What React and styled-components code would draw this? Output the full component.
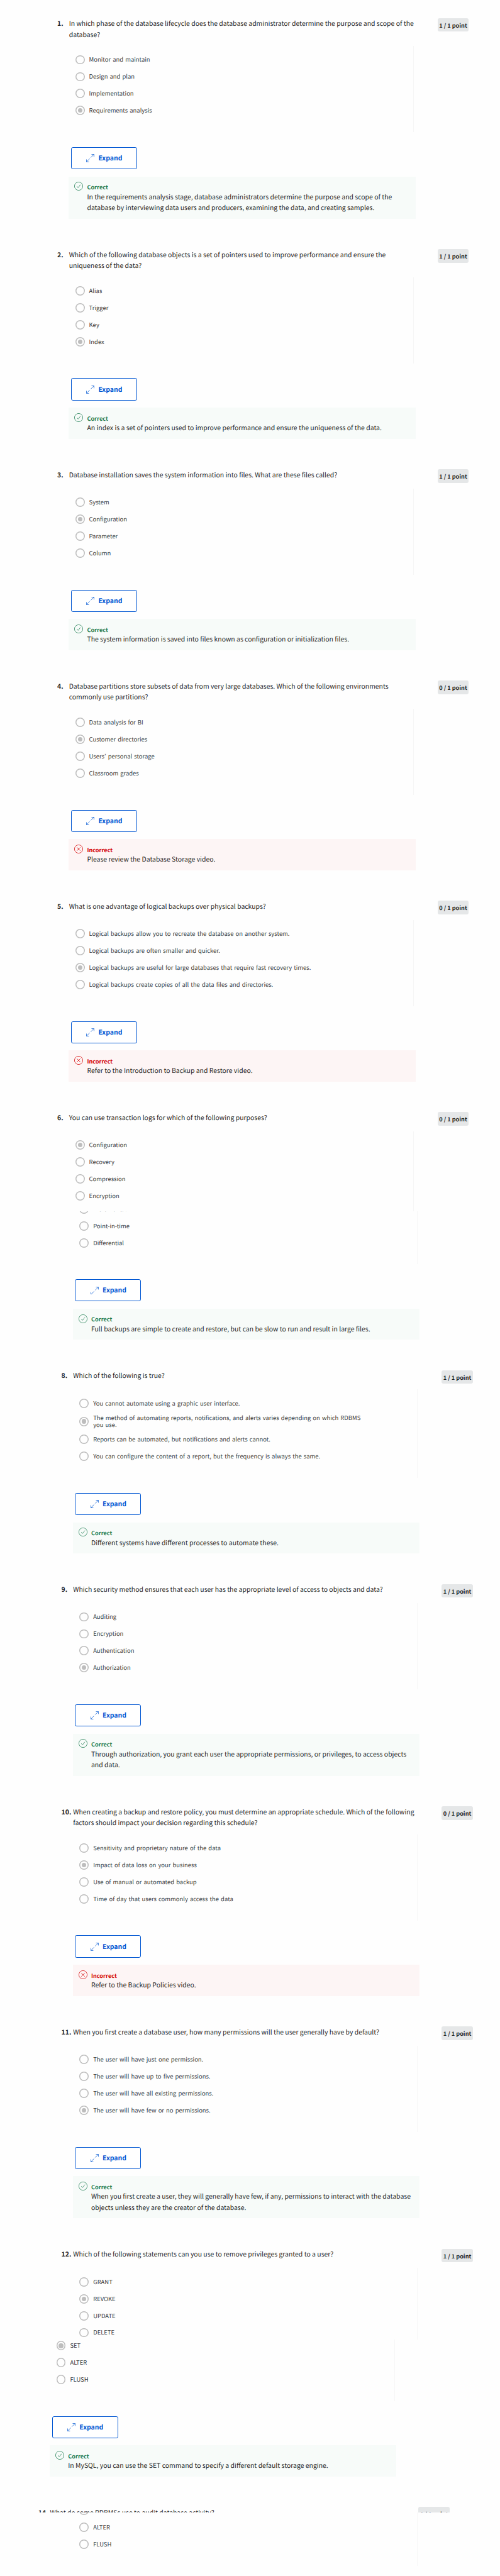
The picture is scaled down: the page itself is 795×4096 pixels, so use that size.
import React from "react";
import styled, { createGlobalStyle } from "styled-components";

const u = (n) => `${(n * 0.58447).toFixed(3)}px`;
const w = (n) => `${(n * 0.58413).toFixed(3)}px`;

const Global = createGlobalStyle`
  * { box-sizing: border-box; }
  html, body { margin: 0; padding: 0; background: #fefefe; }
  body {
    font-family: "Noto Sans CJK KR", "Noto Sans", sans-serif;
    color: #1f1f1f;
    -webkit-font-smoothing: antialiased;
    text-rendering: geometricPrecision;
  }
`;

const Page = styled.main`
  width: 795px;
  height: 4096px;
  padding-top: ${u(49)};
  overflow: hidden;
`;

const Slice = styled.section`
  display: flex;
  flex-direction: column;
  width: ${w(1121)};
  height: ${(p) => (p.$height ? u(p.$height) : "auto")};
  margin-left: ${(p) => w(155.8 + (p.$shift || 0))};
  padding-bottom: ${(p) => (p.$height ? 0 : u(83.1))};
  overflow: hidden;
`;

const Header = styled.header`
  display: flex;
  align-items: flex-start;
  min-height: ${u(36)};
  margin-bottom: ${u(16)};
`;

const Number = styled.span`
  flex: none;
  width: ${w(32)};
  padding-top: ${u(0.8)};
  margin-bottom: ${u(-0.8)};
  font-size: ${w(17.88)};
  font-weight: 700;
  line-height: ${u(30)};
  white-space: nowrap;
`;

const Title = styled.h2`
  flex: none;
  width: ${w(1003.2)};
  margin: 0 0 ${u(-0.8)};
  padding-top: ${u(0.8)};
  font-size: ${w(17.9)};
  font-weight: 400;
  line-height: ${u(30)};
  white-space: pre;
`;

const Badge = styled.span`
  flex: none;
  display: flex;
  align-items: center;
  justify-content: center;
  width: ${w(85)};
  height: ${u(36.5)};
  margin-bottom: ${u(-0.5)};
  padding-top: ${u(0.8)};
  border-radius: ${w(5)};
  background: #e5e7e8;
  font-size: ${w(15.65)};
  font-weight: 700;
  white-space: nowrap;
`;

const Options = styled.div`
  flex: none;
  width: ${w(938.6)};
  margin-left: ${w(31.6)};
  padding: ${u(14.7)} 0 ${u(36)} ${w(17.7)};
  border-right: 1px solid #f6f6f6;
`;

const Option = styled.div`
  display: flex;
  align-items: center;
  gap: ${w(12)};
  height: ${(p) => u(p.$tall ? 52.2 : 46)};
  font-size: ${w(16.15)};
  word-spacing: ${w(1.7)};
  line-height: ${u(19)};
  color: #373a3c;
  white-space: pre;
`;

const Radio = styled.span`
  flex: none;
  display: flex;
  align-items: center;
  justify-content: center;
  width: ${w(25.4)};
  height: ${w(25.4)};
  border-radius: 50%;
  box-shadow: inset 0 0 0 ${w(2.6)} #bdbdbd;
`;

const Dot = styled.span`
  width: ${w(12.6)};
  height: ${w(12.6)};
  border-radius: 50%;
  background: #bdbdbd;
`;

const Expand = styled.button`
  flex: none;
  display: flex;
  align-items: center;
  width: ${w(180)};
  height: ${u(60)};
  margin: ${u(40.5)} 0 ${u(20)} ${w(37.2)};
  padding: ${u(1)} 0 0 ${w(40.3)};
  gap: ${w(10.8)};
  border: 1px solid #0056d2;
  border-radius: ${w(5)};
  background: #fff;
  color: #0056d2;
  font: inherit;
  font-size: ${w(17.88)};
  font-weight: 700;
  text-rendering: inherit;
`;

const Feedback = styled.div`
  flex: none;
  display: flex;
  align-items: flex-start;
  gap: ${w(10.6)};
  width: ${w(944)};
  margin-left: ${w(31.2)};
  padding: ${u(15.2)} 0 ${u(13.4)} ${w(15.4)};
  background: ${(p) => (p.$ok ? "#f7fbf9" : "#fdf5f5")};
`;

const Verdict = styled.div`
  height: ${u(26)};
  padding-top: ${u(0.8)};
  color: ${(p) => (p.$ok ? "#1d7c50" : "#d30001")};
  font-size: ${w(15.65)};
  font-weight: 700;
  line-height: ${u(24)};
`;

const Explanation = styled.p`
  margin: 0;
  font-size: ${w(17.9)};
  line-height: ${u(30.2)};
  white-space: pre;
`;

const StatusSvg = styled.svg`
  flex: none;
  width: ${w(24)};
  height: ${w(24)};
`;

const ArrowSvg = styled.svg`
  flex: none;
  width: ${w(22)};
  height: ${w(22)};
`;

const ExpandIcon = () => (
  <ArrowSvg viewBox="0 0 22 22" fill="none" stroke="#0056d2" strokeWidth="1.3">
    <path d="M12.5 9.5 21 1M14.5 .7H21.3V7.5M9.5 12.5 1 21M.7 14.5V21.3H7.5" />
  </ArrowSvg>
);

const StatusIcon = ({ ok }) => (
  <StatusSvg viewBox="0 0 24 24" fill="none" stroke={ok ? "#1d7c50" : "#d30001"} strokeWidth="1.3">
    <circle cx="12" cy="12" r="11.3" />
    {ok ? <path d="M7 12.4 10.8 16 17 8" /> : <path d="M7.3 7.3 16.7 16.7M16.7 7.3 7.3 16.7" />}
  </StatusSvg>
);

const Head = ({ n, title, score }) => (
  <Header>
    <Number>{n}.</Number>
    <Title>{title}</Title>
    <Badge>{`${score} / 1 point`}</Badge>
  </Header>
);

const Choice = ({ label, on }) => (
  <Option $tall={label.includes("\n")}>
    <Radio>{on && <Dot />}</Radio>
    <span>{label}</span>
  </Option>
);

const Choices = ({ items, picked }) =>
  items.map((label, i) => <Choice key={label} label={label} on={i === picked} />);

const Result = ({ ok, text }) => (
  <>
    <Expand>
      <ExpandIcon />
      Expand
    </Expand>
    <Feedback $ok={ok}>
      <StatusIcon ok={ok} />
      <div>
        <Verdict $ok={ok}>{ok ? "Correct" : "Incorrect"}</Verdict>
        <Explanation>{text}</Explanation>
      </div>
    </Feedback>
  </>
);

const Question = ({ shift, n, title, score, items, picked, ok, text }) => (
  <Slice $shift={shift}>
    <Head n={n} title={title} score={score} />
    <Options>
      <Choices items={items} picked={picked} />
    </Options>
    <Result ok={ok} text={text} />
  </Slice>
);

/* A list that begins part-way through an option row. */
const CutOptions = styled(Options)`
  height: ${(p) => u(p.$height)};
  padding-top: 0;
  padding-bottom: 0;
  overflow: hidden;
`;

const CutInner = styled.div`
  margin-top: ${(p) => u(p.$offset)};
`;

const firstPart = [
  { n: 1, score: 1, title: "In which phase of the database lifecycle does the database administrator determine the purpose and scope of the\ndatabase?", items: ["Monitor and maintain", "Design and plan", "Implementation", "Requirements analysis"], picked: 3, ok: true, text: "In the requirements analysis stage, database administrators determine the purpose and scope of the\ndatabase by interviewing data users and producers, examining the data, and creating samples." },
  { n: 2, score: 1, title: "Which of the following database objects is a set of pointers used to improve performance and ensure the\nuniqueness of the data?", items: ["Alias", "Trigger", "Key", "Index"], picked: 3, ok: true, text: "An index is a set of pointers used to improve performance and ensure the uniqueness of the data." },
  { n: 3, score: 1, title: "Database installation saves the system information into files. What are these files called?", items: ["System", "Configuration", "Parameter", "Column"], picked: 1, ok: true, text: "The system information is saved into files known as configuration or initialization files." },
  { n: 4, score: 0, title: "Database partitions store subsets of data from very large databases. Which of the following environments\ncommonly use partitions?", items: ["Data analysis for BI", "Customer directories", "Users’ personal storage", "Classroom grades"], picked: 1, ok: false, text: "Please review the Database Storage video." },
  { n: 5, score: 0, title: "What is one advantage of logical backups over physical backups?", items: ["Logical backups allow you to recreate the database on another system.", "Logical backups are often smaller and quicker.", "Logical backups are useful for large databases that require fast recovery times.", "Logical backups create copies of all the data files and directories."], picked: 2, ok: false, text: "Refer to the Introduction to Backup and Restore video." },
];

const secondPart = [
  { n: 8, score: 1, title: "Which of the following is true?", items: ["You cannot automate using a graphic user interface.", "The method of automating reports, notifications, and alerts varies depending on which RDBMS\nyou use.", "Reports can be automated, but notifications and alerts cannot.", "You can configure the content of a report, but the frequency is always the same."], picked: 1, ok: true, text: "Different systems have different processes to automate these." },
  { n: 9, score: 1, title: "Which security method ensures that each user has the appropriate level of access to objects and data?", items: ["Auditing", "Encryption", "Authentication", "Authorization"], picked: 3, ok: true, text: "Through authorization, you grant each user the appropriate permissions, or privileges, to access objects\nand data." },
  { n: 10, score: 0, title: "When creating a backup and restore policy, you must determine an appropriate schedule. Which of the following\nfactors should impact your decision regarding this schedule?", items: ["Sensitivity and proprietary nature of the data", "Impact of data loss on your business", "Use of manual or automated backup", "Time of day that users commonly access the data"], picked: 1, ok: false, text: "Refer to the Backup Policies video." },
  { n: 11, score: 1, title: "When you first create a database user, how many permissions will the user generally have by default?", items: ["The user will have just one permission.", "The user will have up to five permissions.", "The user will have all existing permissions.", "The user will have few or no permissions."], picked: 3, ok: true, text: "When you first create a user, they will generally have few, if any, permissions to interact with the database\nobjects unless they are the creator of the database." },
];

export default function App() {
  return (
    <>
      <Global />
      <Page>
        {firstPart.map((q) => <Question key={q.n} {...q} />)}

        <Slice $height={270.4}>
          <Head n={6} title="You can use transaction logs for which of the following purposes?" score={0} />
          <Options>
            <Choices items={["Configuration", "Recovery", "Compression", "Encryption"]} picked={0} />
          </Options>
        </Slice>
        <Slice $shift={11.2}>
          <CutOptions $height={143.8}>
            <CutInner $offset={-29.2}>
              <Choices items={["Incremental", "Point-in-time", "Differential"]} />
            </CutInner>
          </CutOptions>
          <Result ok text="Full backups are simple to create and restore, but can be slow to run and result in large files." />
        </Slice>

        {secondPart.map((q) => <Question key={q.n} shift={11.2} {...q} />)}

        <Slice $shift={11.2} $height={245.6}>
          <Head n={12} title="Which of the following statements can you use to remove privileges granted to a user?" score={1} />
          <Options>
            <Choices items={["GRANT", "REVOKE", "UPDATE", "DELETE"]} picked={1} />
          </Options>
        </Slice>
        <Slice $shift={-51.7}>
          <CutOptions $height={168.4}>
            <CutInner $offset={-5.4}>
              <Choices items={["SET", "ALTER", "FLUSH"]} picked={0} />
            </CutInner>
          </CutOptions>
          <Result ok text="In MySQL, you can use the SET command to specify a different default storage engine." />
        </Slice>
        <Slice $shift={-51.7} $height={15}>
          <Head n={14} title="What do some RDBMSs use to audit database activity?" score={1} />
        </Slice>
        <Slice $shift={11.2} $height={170}>
          <CutOptions $height={145}>
            <CutInner $offset={-28.6}>
              <Choices items={["SET", "ALTER", "FLUSH"]} />
            </CutInner>
          </CutOptions>
        </Slice>
      </Page>
    </>
  );
}
